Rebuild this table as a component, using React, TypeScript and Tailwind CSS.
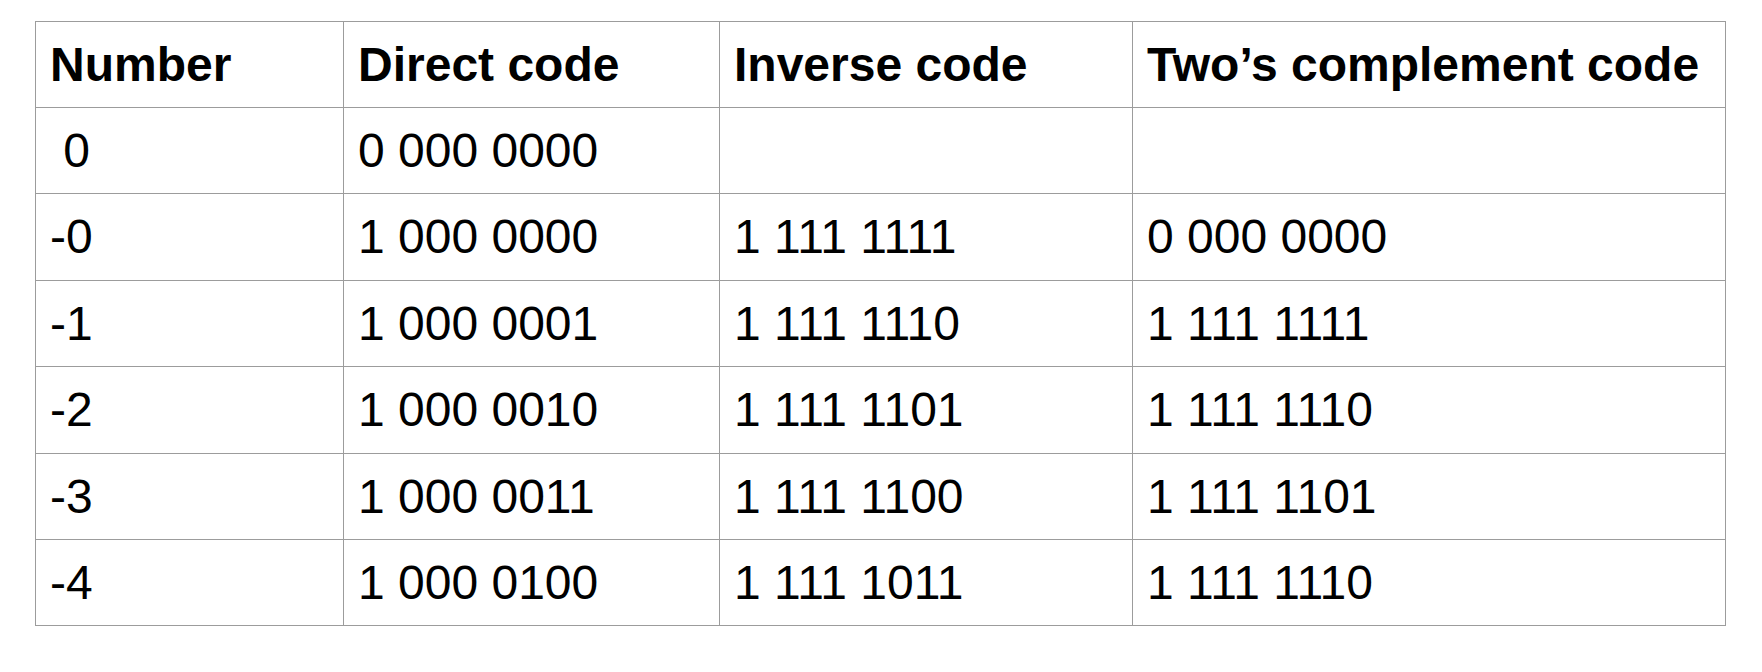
import React from 'react';

const header = ['Number', 'Direct code', 'Inverse code', 'Two\u2019s complement code'];

const rows: string[][] = [
  [' 0', '0 000 0000', '', ''],
  ['-0', '1 000 0000', '1 111 1111', '0 000 0000'],
  ['-1', '1 000 0001', '1 111 1110', '1 111 1111'],
  ['-2', '1 000 0010', '1 111 1101', '1 111 1110'],
  ['-3', '1 000 0011', '1 111 1100', '1 111 1101'],
  ['-4', '1 000 0100', '1 111 1011', '1 111 1110'],
];

const Cell: React.FC<{ text: string; bold?: boolean }> = ({ text, bold }) => (
  <div
    className={`border-r border-b border-[#9c9c9c] pl-[14px] pt-[15px] leading-[56px] whitespace-pre ${
      bold ? 'font-bold' : ''
    }`}
  >
    {text}
  </div>
);

export default function App() {
  return (
    <div className="w-[1762px] h-[672px] bg-white text-black font-['Liberation_Sans',Arial,sans-serif] text-[48px] pt-[21px] pl-[35px]">
      <div className="grid w-max grid-cols-[308px_376px_413px_593px] grid-rows-[86px_86px_87px_86px_87px_86px_86px] border-l border-t border-[#9c9c9c]">
        {header.map((h) => (
          <Cell key={h} text={h} bold />
        ))}
        {rows.map((r, i) => r.map((c, j) => <Cell key={`${i}-${j}`} text={c} />))}
      </div>
    </div>
  );
}
